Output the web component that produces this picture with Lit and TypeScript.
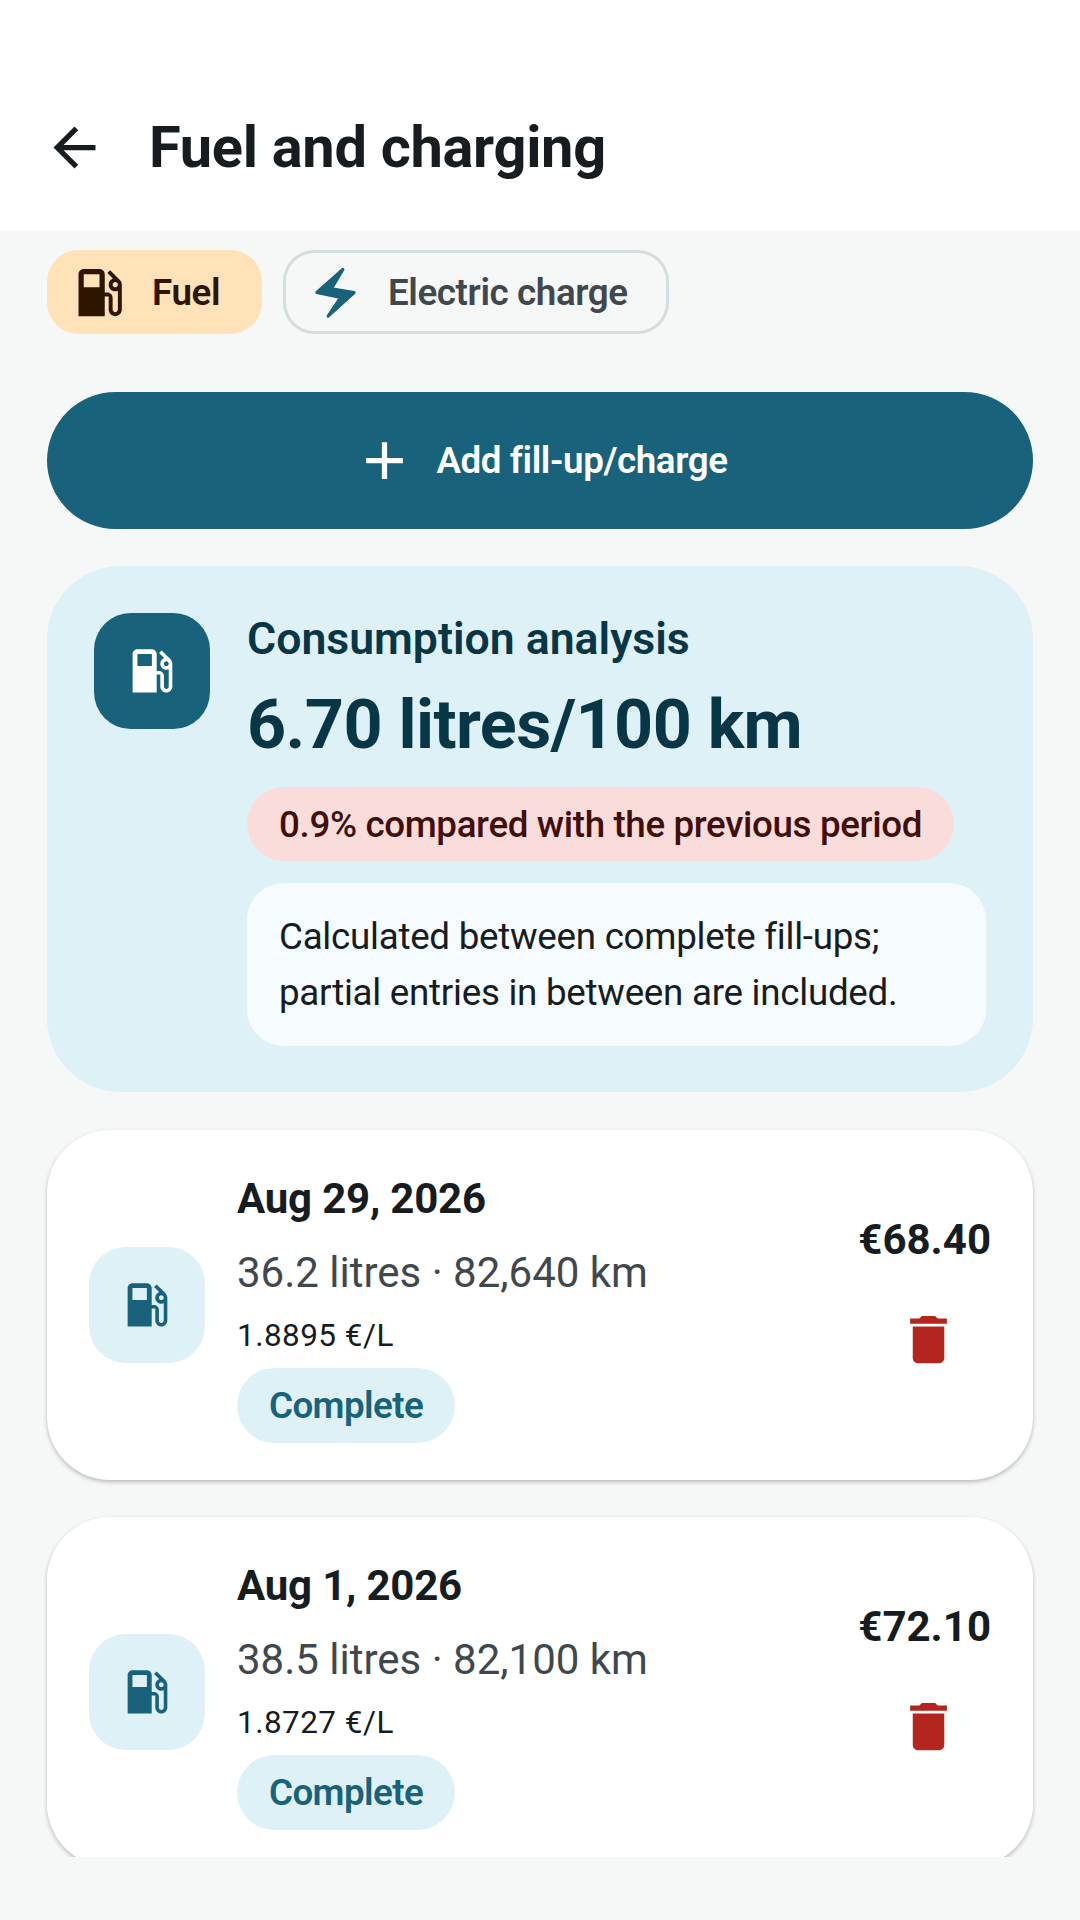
import { LitElement, html, css, svg } from "lit";
import { customElement } from "lit/decorators.js";

const PUMP = "M19.77 7.23l.01-.01-3.72-3.72L15 4.56l2.11 2.11c-.94.36-1.61 1.26-1.61 2.33 0 1.38 1.12 2.5 2.5 2.5.36 0 .69-.08 1-.21v7.21c0 .55-.45 1-1 1s-1-.45-1-1V14c0-1.1-.9-2-2-2h-1V5c0-1.1-.9-2-2-2H6c-1.1 0-2 .9-2 2v16h10v-7.5h1.5v5c0 1.38 1.12 2.5 2.5 2.5s2.5-1.12 2.5-2.5V9c0-.69-.28-1.32-.73-1.77zM12 10H6V5h6v5zm6 0c-.55 0-1-.45-1-1s.45-1 1-1 1 .45 1 1-.45 1-1 1z";
const TRASH = "M6 19c0 1.1.9 2 2 2h8c1.1 0 2-.9 2-2V7H6v12zM19 4h-3.5l-1-1h-5l-1 1H5v2h14V4z";
const icon = (d: string) => html`<svg viewBox="0 0 24 24" fill="currentColor">${svg`<path d=${d}></path>`}</svg>`;

const records = [
  { date: "Aug 29, 2026", sub: "36.2 litres · 82,640 km", rate: "1.8895 €/L", price: "€68.40" },
  { date: "Aug 1, 2026", sub: "38.5 litres · 82,100 km", rate: "1.8727 €/L", price: "€72.10" },
];

@customElement("app-root")
export class AppRoot extends LitElement {
  static styles = css`
    :host { display: block; width: 1080px; height: 1920px; background: #f6f8f8; font-family: Roboto, "Noto Sans", sans-serif; color: #161c1f; overflow: hidden; }
    .header { height: 231px; box-sizing: border-box; background: #fff; padding: 110px 0 0 41px; display: flex; align-items: flex-start; }
    .back { width: 66px; height: 74px; display: flex; align-items: center; justify-content: center; color: #161c1f; }
    .back svg { width: 63px; height: 63px; }
    .title { margin: 0 0 0 42px; font-size: 57.75px; line-height: 74px; font-weight: 700; letter-spacing: -0.3px; }
    .main { height: 1626px; box-sizing: border-box; padding: 19px 47px 0; overflow: hidden; display: flex; flex-direction: column; }
    .chips { display: flex; gap: 21px; flex: none; }
    .chip { height: 84px; box-sizing: border-box; border-radius: 31.5px; display: flex; align-items: center; font-size: 36.75px; font-weight: 600; letter-spacing: -0.4px; }
    .chip svg { width: 63px; height: 63px; flex: none; }
    .chip.on { width: 215px; padding-left: 21px; gap: 21px; background: #ffe2b8; color: #2e1500; }
    .chip.off { width: 386px; padding-left: 18px; gap: 21px; border: 3px solid #d3dcdf; color: #41484d; }
    .chip.off svg { color: #18627b; }
    .add { flex: none; margin-top: 58px; height: 137px; box-sizing: border-box; padding-left: 1px; border-radius: 69px; background: #18627b; color: #fff; display: flex; align-items: center; justify-content: center; gap: 20px; font-size: 36.75px; font-weight: 600; letter-spacing: -0.4px; }
    .add svg { width: 63px; height: 63px; }
    .analysis { flex: none; margin-top: 37px; margin-bottom: 1px; background: #def1f7; border-radius: 73.5px; padding: 47px; display: flex; gap: 37px; box-sizing: border-box; height: 526px; }
    .tile { flex: none; width: 116px; height: 116px; border-radius: 36.75px; display: flex; align-items: center; justify-content: center; }
    .tile svg { width: 57.75px; height: 57.75px; }
    .tile.dark { background: #18627b; color: #fff; }
    .tile.light { background: #def1f7; color: #18627b; }
    .a-body { flex: 1; min-width: 0; display: flex; flex-direction: column; align-items: flex-start; color: #073647; }
    .a-title { font-size: 44.6px; line-height: 52px; font-weight: 600; }
    .a-value { margin-top: 15px; font-size: 68.25px; line-height: 90px; font-weight: 700; letter-spacing: -0.55px; }
    .a-pill { margin-top: 17px; height: 74px; box-sizing: border-box; padding: 1px 32px 0; border-radius: 37px; background: #fadddb; color: #410e0b; font-size: 36.75px; line-height: 74px; font-weight: 500; letter-spacing: -0.36px; white-space: nowrap; }
    .a-note { margin-top: 22px; align-self: stretch; box-sizing: border-box; height: 163px; padding: 26px 32px; border-radius: 36.75px; background: #f5fbfe; color: #161c1f; font-size: 36.75px; line-height: 56px; letter-spacing: -0.27px; }
    .rec { flex: none; margin-top: 37px; height: 350px; box-sizing: border-box; background: #fff; border-radius: 63px; padding: 37px 42px; display: flex; align-items: center; gap: 32px; box-shadow: 0 2px 4px rgba(0,0,0,.25); }
    .r-body { flex: 1; min-width: 0; display: flex; flex-direction: column; align-items: flex-start; }
    .r-date { font-size: 42px; line-height: 62px; font-weight: 700; letter-spacing: -0.2px; }
    .r-sub { margin-top: 14px; font-size: 42px; line-height: 58px; color: #41484d; }
    .r-rate { margin-top: 10px; font-size: 31.5px; line-height: 48px; letter-spacing: 0.45px; }
    .r-tag { margin-top: 8px; height: 75px; padding: 0 32px; border-radius: 37.5px; background: #def1f7; color: #18627b; font-size: 36.75px; line-height: 75px; font-weight: 600; letter-spacing: -0.6px; }
    .r-end { flex: none; display: flex; flex-direction: column; align-items: flex-end; gap: 5px; }
    .r-price { font-size: 42px; line-height: 63px; font-weight: 700; }
    .r-del { width: 126px; height: 126px; display: flex; align-items: center; justify-content: center; color: #b3261e; }
    .r-del svg { width: 63px; height: 63px; }
    .bolt path { stroke: currentColor; stroke-width: 1.2; stroke-linejoin: round; }
  `;

  render() {
    return html`
      <div class="header">
        <div class="back"><svg viewBox="0 0 24 24" fill="currentColor"><path d="M7.825 13l5.6 5.6L12 20l-8-8 8-8 1.425 1.4-5.6 5.6H20v2H7.825z"></path></svg></div>
        <h1 class="title">Fuel and charging</h1>
      </div>
      <div class="main">
        <div class="chips">
          <div class="chip on">${icon(PUMP)}<span>Fuel</span></div>
          <div class="chip off"><svg class="bolt" viewBox="0 0 24 24" fill="currentColor"><path d="M14.8 3.2L10.4 10.6L19.1 12L9.2 21L14 13.9L4.9 12Z"></path></svg><span>Electric charge</span></div>
        </div>
        <div class="add">${icon("M19 13h-6v6h-2v-6H5v-2h6V5h2v6h6v2z")}<span>Add fill-up/charge</span></div>
        <div class="analysis">
          <div class="tile dark">${icon(PUMP)}</div>
          <div class="a-body">
            <div class="a-title">Consumption analysis</div>
            <div class="a-value">6.70 litres/100 km</div>
            <div class="a-pill">0.9% compared with the previous period</div>
            <div class="a-note">Calculated between complete fill-ups;<br />partial entries in between are included.</div>
          </div>
        </div>
        ${records.map((r) => html`
          <div class="rec">
            <div class="tile light">${icon(PUMP)}</div>
            <div class="r-body">
              <div class="r-date">${r.date}</div>
              <div class="r-sub">${r.sub}</div>
              <div class="r-rate">${r.rate}</div>
              <div class="r-tag">Complete</div>
            </div>
            <div class="r-end">
              <div class="r-price">${r.price}</div>
              <div class="r-del">${icon(TRASH)}</div>
            </div>
          </div>`)}
      </div>
    `;
  }
}
